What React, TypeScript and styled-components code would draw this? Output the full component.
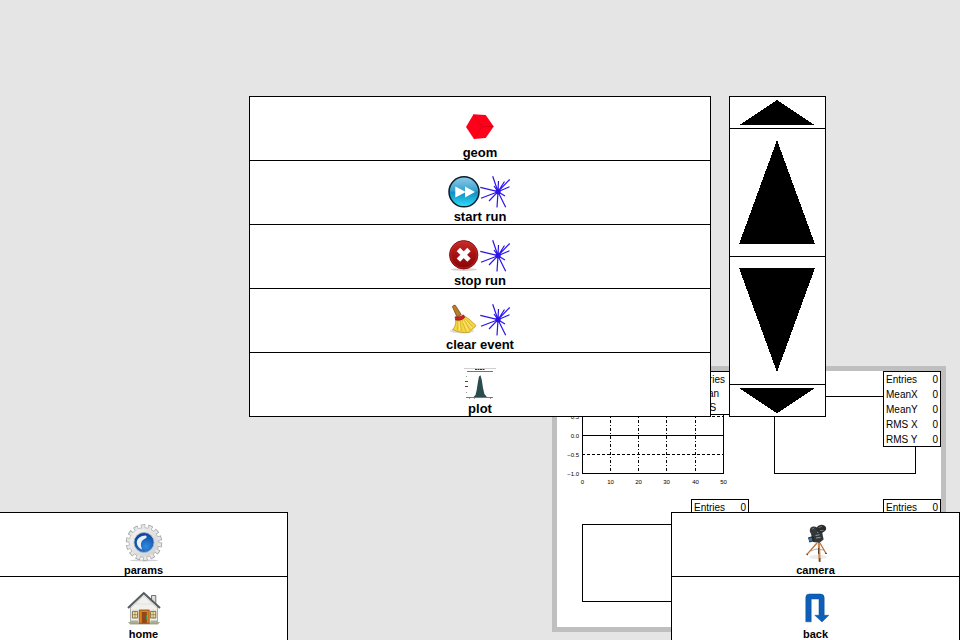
import React from "react";
import styled, { createGlobalStyle } from "styled-components";

const GlobalStyle = createGlobalStyle`
  *, *::before, *::after { box-sizing: border-box; }
  body {
    margin: 0;
    background: #e5e5e5;
    color: #000;
    font-family: "Liberation Sans", Arial, sans-serif;
  }
`;

/* ---------- layout ---------- */

const Stage = styled.main`
  display: grid;
  grid-template: minmax(0, 1fr) / minmax(0, 1fr);
  height: 100vh;
  overflow: hidden;
`;

const CanvasFrame = styled.section`
  grid-area: 1 / 1;
  justify-self: end;
  align-self: end;
  display: grid;
  grid-template: repeat(2, minmax(0, 1fr)) / repeat(2, minmax(0, 1fr));
  width: calc(40% + 10px);
  height: calc(40% + 10px);
  margin: 0 14px 8px 0;
  border: 5px solid #bfbfbf;
  background: #fff;
`;

const PlotCell = styled.figure`
  display: grid;
  grid-template: minmax(0, 1fr) / minmax(0, 1fr);
  margin: 0;
`;

const PlotSvg = styled.svg`
  grid-area: 1 / 1;
  width: 100%;
  height: 100%;
  font-size: 6px;
`;

const StatsTable = styled.table<{ $tall?: boolean }>`
  grid-area: 1 / 1;
  justify-self: end;
  align-self: start;
  width: 58px;
  height: ${(p) => (p.$tall ? 76 : 44)}px;
  border: 1px solid #000;
  border-spacing: 0;
  background: #fff;
  font-size: 10px;
  line-height: 12px;
  white-space: nowrap;
`;

const StatName = styled.th`
  padding: 2px 0 0 2px;
  font-weight: 400;
  text-align: left;
`;

const StatValue = styled.td`
  padding: 2px 2px 0 0;
  text-align: right;
`;

const UpperLayer = styled.div`
  grid-area: 1 / 1;
  z-index: 1;
  align-self: start;
  display: flex;
  justify-content: space-between;
  width: 60%;
  height: calc(50% + 1px);
  margin: 15vh 0 0 26%;
`;

const LowerLayer = styled.div`
  grid-area: 1 / 1;
  z-index: 1;
  align-self: end;
  display: flex;
  justify-content: space-between;
  height: 20%;
`;

const Menu = styled.nav`
  display: flex;
  flex-direction: column;
  border: 1px solid #000;
  border-top: 0;
  background: #fff;
`;

const MainMenu = styled(Menu)`
  width: calc(80% + 2px);
  margin-left: -1px;
`;

const CornerMenu = styled(Menu)<{ $side: "left" | "right" }>`
  width: ${(p) => (p.$side === "left" ? "30%" : "calc(30% + 1px)")};
  border-left-width: ${(p) => (p.$side === "left" ? 0 : 1)}px;
  border-bottom: 0;
`;

const Scroller = styled(Menu)`
  width: calc(100% / 6 + 1px);
`;

const MenuButton = styled.button<{ $compact?: boolean }>`
  flex: 1 1 0;
  min-height: 0;
  display: flex;
  flex-direction: column;
  align-items: center;
  padding: ${(p) => (p.$compact ? 11 : 15)}px 0 0;
  border: 0;
  border-top: 1px solid #000;
  background: #fff;
  color: #000;
  font: ${(p) => (p.$compact ? "700 11px/16px" : "700 13px/18px")} "Liberation Sans", Arial, sans-serif;
  cursor: pointer;
`;

const IconRow = styled.span`
  display: flex;
`;

const Icon = styled.svg<{ $size?: number }>`
  display: block;
  flex: none;
  width: ${(p) => p.$size ?? 32}px;
  height: ${(p) => p.$size ?? 32}px;
`;

const ScrollButton = styled.button<{ $share: number }>`
  height: ${(p) => p.$share}%;
  display: flex;
  align-items: center;
  justify-content: center;
  padding: 0;
  border: 0;
  border-top: 1px solid #000;
  background: #fff;
  cursor: pointer;
`;

const Triangle = styled.svg`
  width: 80%;
  height: 82%;
`;

/* ---------- icons ---------- */

const GeomIcon = () => (
  <Icon viewBox="0 0 32 32" aria-hidden="true">
    <path d="M2 15 L9.5 2.3 L21.7 3 L29.7 14.5 L21.7 26 L10 27 Z" fill="#fe0019" />
    <path d="M9.5 2.5 L18 14.5 L29.5 14.5 M18 14.5 L10 27" fill="none" stroke="#c80016" strokeWidth="0.5" />
  </Icon>
);

const EventIcon = () => (
  <Icon viewBox="0 0 32 32" aria-hidden="true">
    <g stroke="#2a14ea" strokeWidth="1.2" fill="none">
      <path d="M18 15.7 L0.3 11.3 M18 15.7 L1 22.3 M18 15.7 L12.7 0.3 M18 15.7 L18.5 5" />
      <path d="M18 15.7 L24.5 5.5 M18 15.7 L29.7 3.5 M18 15.7 L29.5 10.8 M18 15.7 L25 20" />
      <path d="M18 15.7 L17 31.5 M18 15.7 L25.7 31.3 M18 15.7 L9 25 M18 15.7 L14 10" />
    </g>
    <circle cx="18" cy="15.7" r="2.6" fill="#2a14ea" />
  </Icon>
);

const StartIcon = () => (
  <Icon viewBox="0 0 32 32" aria-hidden="true">
    <defs>
      <linearGradient id="startFill" x1="0" y1="0" x2="0" y2="1">
        <stop offset="0" stopColor="#8fcbe6" />
        <stop offset="0.45" stopColor="#3aa3d2" />
        <stop offset="0.52" stopColor="#0f8dc4" />
        <stop offset="1" stopColor="#2fe0f8" />
      </linearGradient>
    </defs>
    <circle cx="16" cy="15.8" r="15" fill="url(#startFill)" stroke="#091c2b" strokeWidth="1.5" />
    <path d="M7.3 10.4 L17 15.4 L17 10.4 L27 16 L17 21.6 L17 16.6 L7.3 21.6 Z" fill="#fff" />
  </Icon>
);

const StopIcon = () => (
  <Icon viewBox="0 0 32 32" aria-hidden="true">
    <defs>
      <linearGradient id="stopFill" x1="0" y1="0" x2="0" y2="1">
        <stop offset="0" stopColor="#c52b2b" />
        <stop offset="0.5" stopColor="#a81111" />
        <stop offset="1" stopColor="#8a0505" />
      </linearGradient>
    </defs>
    <ellipse cx="16" cy="29.6" rx="13" ry="1.4" fill="#d6d2ce" />
    <circle cx="15.7" cy="14.8" r="14.2" fill="url(#stopFill)" stroke="#840808" strokeWidth="0.9" />
    <circle cx="15.7" cy="14.8" r="13.2" fill="none" stroke="#c43a3a" strokeWidth="0.5" />
    <path d="M10.4 9.5 L21 20.1 M21 9.5 L10.4 20.1" stroke="#fff" strokeWidth="4.8" strokeLinecap="butt" />
  </Icon>
);

const BroomIcon = () => (
  <Icon viewBox="0 0 32 32" aria-hidden="true">
    <ellipse cx="14" cy="27" rx="12" ry="2.4" fill="#dedede" />
    <path d="M4.4 2.6 Q5.4 0.6 7.4 1.4 L13.2 10.6 L9 13 Z" fill="#bb7c2c" stroke="#754411" strokeWidth="0.8" />
    <path d="M7.5 15.5 L16.3 12 L21 15 L28 21.5 C26.8 24 23.5 25.5 21 28.4 C15.5 29.2 9.5 28 4.6 25.6 C7 23 8.4 19.5 7.5 15.5 Z" fill="#f3d441" stroke="#b98e18" strokeWidth="0.7" />
    <path d="M10 17 L9.5 26 M12 16.5 L13.5 27 M14 16 L18 27.5 M16 15.4 L22 26 M18 15.4 L25 23.5" stroke="#cfa325" strokeWidth="0.6" fill="none" />
    <path d="M11 18 L11.5 26 M15 17 L20 26.5 M17 16 L24 24" stroke="#fff3a0" strokeWidth="0.8" />
    <path d="M7 12.8 C10 13.6 13 12.4 15.4 10.8 L16.8 13.4 C14.4 15.8 11 16.8 7.7 16 Z" fill="#cf2222" stroke="#7c1010" strokeWidth="0.6" />
  </Icon>
);

const PlotIcon = () => (
  <Icon viewBox="0 0 32 32" aria-hidden="true">
    <path d="M0 0.5 H32" stroke="#cfcfcf" />
    <path d="M11 1.5 H21" stroke="#333" strokeDasharray="2 0.5" />
    <path d="M3 3.5 H29" stroke="#777" />
    <path d="M9 29.5 L11.5 27 L12.7 22 L14 13.5 L15 8.5 L16.5 7.3 L17.8 12 L19 20 L20.4 26 L23.3 29.5 Z" fill="#294d4f" />
    <path d="M2 29.5 H29" stroke="#777" />
    <path d="M1 13.5 H4 M1 18.5 H4" stroke="#444" />
    <path d="M2 8.5 H3 M2 24.5 H3 M5 30.5 H6 M10 30.5 H11 M26 30.5 H27" stroke="#999" />
  </Icon>
);

const ParamsIcon = () => (
  <Icon $size={38} viewBox="0 0 38 38" aria-hidden="true">
    <defs>
      <linearGradient id="gearFill" x1="0" y1="0" x2="1" y2="1">
        <stop offset="0" stopColor="#f7f7f7" />
        <stop offset="1" stopColor="#cccccc" />
      </linearGradient>
      <radialGradient id="gearCore" cx="0.6" cy="0.7" r="0.7">
        <stop offset="0" stopColor="#2f8be0" />
        <stop offset="1" stopColor="#0a3f98" />
      </radialGradient>
    </defs>
    <ellipse cx="19" cy="36.4" rx="14" ry="1" fill="#d0d0d0" />
    <circle cx="19" cy="18.5" r="16" fill="none" stroke="#a2a2a2" strokeWidth="4.4" strokeDasharray="4.4 2.781" />
    <circle cx="19" cy="18.5" r="15" fill="url(#gearFill)" stroke="#b0b0b0" strokeWidth="0.8" />
    <circle cx="19" cy="18.5" r="15.6" fill="none" stroke="#e6e6e6" strokeWidth="3.6" strokeDasharray="3.1 3.901" strokeDashoffset="-0.6" />
    <circle cx="19" cy="18.5" r="10" fill="url(#gearCore)" stroke="#a8b4c4" strokeWidth="0.8" />
    <path d="M21 11.4 C15.4 11.4 12.2 14.5 11.8 18 C11.8 21.4 13.8 24.4 17.2 25.4 C15.8 22.6 15.4 19.8 16.8 17.2 C18 15.2 20.8 15 21.8 13 Z" fill="#e6f0fb" />
  </Icon>
);

const HomeIcon = () => (
  <Icon $size={38} viewBox="0 0 38 38" aria-hidden="true">
    <path d="M3 34 H35 L33 36.4 H5 Z" fill="#a7aa96" />
    <path d="M26.5 7.5 H30.8 V18 H26.5 Z" fill="#dcdcdc" stroke="#555" strokeWidth="0.8" />
    <path d="M5.5 18 L18.7 6 L32.5 18 V35 H5.5 Z" fill="#f1f1ee" stroke="#8d8d8d" strokeWidth="0.7" />
    <path d="M6 22 H32 M6 26 H32 M6 30 H32 M11 16 H27" stroke="#d6d6d6" strokeWidth="0.6" />
    <path d="M3 20 L18.8 5 L35 20" fill="none" stroke="#555b60" strokeWidth="2" />
    <path d="M5.5 20.2 L18.8 7.8 L32.5 20.2" fill="none" stroke="#c4c9cc" strokeWidth="0.8" />
    <path d="M14.3 22 H24.2 V35.3 H14.3 Z" fill="#d9821e" stroke="#8a4a0a" strokeWidth="0.8" />
    <path d="M16.8 24 H21.8 V35 H16.8 Z" fill="#93471a" />
    <path d="M21 27 H22 V31 H21 Z" fill="#3e9a5a" />
    <path d="M7.4 23.4 H12.6 V30 H7.4 Z M25.6 23.4 H30.8 V30 H25.6 Z" fill="#f3e3a2" stroke="#80643a" strokeWidth="0.9" />
    <path d="M10 23.4 V30 M7.4 26.7 H12.6 M28.2 23.4 V30 M25.6 26.7 H30.8" stroke="#80643a" strokeWidth="0.6" />
    <path d="M5 32.5 H13 V35 H5 Z M25.5 32.5 H33 V35 H25.5 Z" fill="#a9ae98" />
  </Icon>
);

const CameraIcon = () => (
  <Icon $size={38} viewBox="0 0 38 38" aria-hidden="true">
    <ellipse cx="21" cy="33" rx="9" ry="2.2" fill="#ececec" />
    <path d="M20 19 L10 30.4" stroke="#b9713a" strokeWidth="1.4" />
    <path d="M23 19 L29 29.5" stroke="#b9713a" strokeWidth="1.3" />
    <path d="M21.8 18 L22.6 37.6" stroke="#c98a50" strokeWidth="2.2" />
    <path d="M21.6 24 V30 M22.8 34 V38 M9.2 30 L11 31 M28.2 29.4 L30 29.4" stroke="#3b2a20" strokeWidth="0.9" />
    <path d="M14 27 L19 25 L27 26" stroke="#777" strokeWidth="0.6" fill="none" />
    <path d="M14 10 L25 7.6 L26.6 15.4 L22.6 18.8 L16 18 Z" fill="#34373a" />
    <circle cx="16.8" cy="6.6" r="4" fill="#35383a" />
    <ellipse cx="24.2" cy="4.8" rx="5" ry="4" transform="rotate(-15 24.2 4.8)" fill="#2a2c2e" />
    <path d="M21.5 3.6 L25 2.4 M15 5 L17 4.4 M23 6.5 H26.5" stroke="#777b7e" strokeWidth="0.9" />
    <path d="M11 13.5 L16 12 L17.5 17 L12.5 18.5 Z" fill="#23272b" />
    <ellipse cx="13.6" cy="15.6" rx="1.7" ry="2" fill="#2f78bf" />
    <path d="M18.5 11.5 L22.5 10.8 M19 14 L23.5 13.4" stroke="#a0a4a6" strokeWidth="0.9" />
  </Icon>
);

const BackIcon = () => (
  <Icon $size={38} viewBox="0 0 38 38" aria-hidden="true">
    <path
      d="M8.8 33.8 V9.4 Q8.8 6 12.4 6 H23.4 Q27.2 6 27.2 9.6 V27.3 H31.8 L25 34 L17.8 27.3 H22 V11 H14.2 V33.8 Z"
      fill="#0d5fb8"
      stroke="#0a4d9c"
      strokeWidth="0.5"
    />
  </Icon>
);

/* ---------- plots ---------- */

const xTicks = [
  { x: 25, label: "0" },
  { x: 53, label: "10" },
  { x: 81, label: "20" },
  { x: 109, label: "30" },
  { x: 138, label: "40" },
  { x: 166, label: "50" },
];

const yTicks = [
  { y: 25, label: "1.0" },
  { y: 45, label: "0.5" },
  { y: 64, label: "0.0" },
  { y: 83, label: "−0.5" },
  { y: 102, label: "−1.0" },
];

const PlotAxes = () => (
  <g>
    {xTicks.slice(1, 5).map(({ x }) => (
      <path key={x} d={`M${x + 0.5} 25 V102`} stroke="#000" strokeDasharray="3 2 1 2" />
    ))}
    <path d="M25 45.5 H166 M25 83.5 H166" stroke="#000" strokeDasharray="3 2" />
    <path d="M25 64.5 H166" stroke="#000" />
    {xTicks.map(({ x, label }) => (
      <text key={label} x={x + 0.5} y="113" textAnchor="middle">{label}</text>
    ))}
    {yTicks.map(({ y, label }) => (
      <text key={label} x="22" y={y + 3} textAnchor="end">{label}</text>
    ))}
  </g>
);

const oneDim = ["Entries", "Mean", "RMS"];
const twoDim = ["Entries", "MeanX", "MeanY", "RMS X", "RMS Y"];

function Plot({ stats, axes }: { stats: string[]; axes?: boolean }) {
  return (
    <PlotCell>
      <PlotSvg viewBox="0 0 192 128" aria-hidden="true">
        <rect x="25.5" y="25.5" width="141" height="77" fill="none" stroke="#000" />
        {axes && <PlotAxes />}
      </PlotSvg>
      <StatsTable $tall={stats.length > 3}>
        <tbody>
          {stats.map((name) => (
            <tr key={name}>
              <StatName scope="row">{name}</StatName>
              <StatValue>0</StatValue>
            </tr>
          ))}
        </tbody>
      </StatsTable>
    </PlotCell>
  );
}

/* ---------- page ---------- */

const mainItems = [
  { label: "geom", icons: [GeomIcon] },
  { label: "start run", icons: [StartIcon, EventIcon] },
  { label: "stop run", icons: [StopIcon, EventIcon] },
  { label: "clear event", icons: [BroomIcon, EventIcon] },
  { label: "plot", icons: [PlotIcon] },
];

const leftItems = [
  { label: "params", icons: [ParamsIcon] },
  { label: "home", icons: [HomeIcon] },
];

const rightItems = [
  { label: "camera", icons: [CameraIcon] },
  { label: "back", icons: [BackIcon] },
];

const scrollItems = [
  { name: "Step up", share: 10, up: true },
  { name: "Page up", share: 40, up: true },
  { name: "Page down", share: 40, up: false },
  { name: "Step down", share: 10, up: false },
];

type Item = { label: string; icons: React.FC[] };

const Items = ({ items, compact }: { items: Item[]; compact?: boolean }) => (
  <>
    {items.map(({ label, icons }) => (
      <MenuButton key={label} type="button" $compact={compact}>
        <IconRow>
          {icons.map((Glyph, i) => (
            <Glyph key={i} />
          ))}
        </IconRow>
        {label}
      </MenuButton>
    ))}
  </>
);

export default function App() {
  return (
    <>
      <GlobalStyle />
      <Stage>
        <CanvasFrame>
          <Plot stats={oneDim} axes />
          <Plot stats={twoDim} />
          <Plot stats={twoDim} />
          <Plot stats={twoDim} />
        </CanvasFrame>
        <UpperLayer>
          <MainMenu>
            <Items items={mainItems} />
          </MainMenu>
          <Scroller>
            {scrollItems.map(({ name, share, up }) => (
              <ScrollButton key={name} type="button" aria-label={name} $share={share}>
                <Triangle viewBox="0 0 10 10" preserveAspectRatio="none" shapeRendering="crispEdges">
                  <path d={up ? "M5 0 L10 10 H0 Z" : "M0 0 H10 L5 10 Z"} />
                </Triangle>
              </ScrollButton>
            ))}
          </Scroller>
        </UpperLayer>
        <LowerLayer>
          <CornerMenu $side="left">
            <Items items={leftItems} compact />
          </CornerMenu>
          <CornerMenu $side="right">
            <Items items={rightItems} compact />
          </CornerMenu>
        </LowerLayer>
      </Stage>
    </>
  );
}
